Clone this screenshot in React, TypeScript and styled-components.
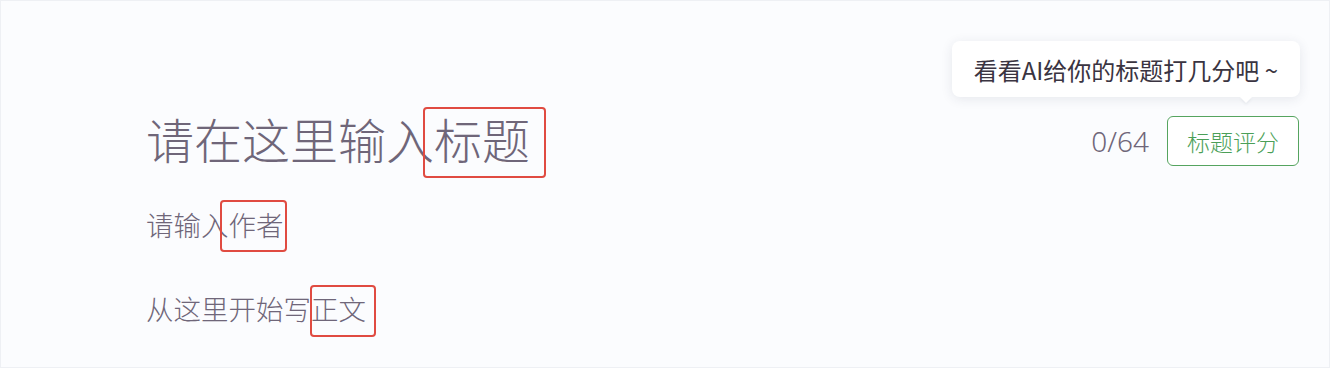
import React from "react";
import styled, { createGlobalStyle } from "styled-components";

const GlobalStyle = createGlobalStyle`
  html, body {
    margin: 0;
    padding: 0;
    background: #fbfcfe;
  }
  * {
    box-sizing: border-box;
  }
  body {
    font-family: "Noto Sans CJK SC", "Noto Sans", sans-serif;
  }
`;

// offsets of the red annotation frame from the marked text's line box
type Inset = { $l: number; $r: number; $t: number; $b: number };

export default function App() {
  return (
    <>
      <GlobalStyle />
      <Editor>
        <TitleRow>
          <TitleInput>
            请在这里输入
            <Mark $l={-11} $r={16} $t={2} $b={7}>标题</Mark>
          </TitleInput>
          <TitleTools>
            <Counter>0/64</Counter>
            <ScoreWrap>
              <Tooltip>看看AI给你的标题打几分吧 ~</Tooltip>
              <ScoreButton>标题评分</ScoreButton>
            </ScoreWrap>
          </TitleTools>
        </TitleRow>
        <AuthorLine>
          请输入
          <Mark $l={-9} $r={3} $t={2} $b={2}>作者</Mark>
        </AuthorLine>
        <BodyLine>
          从这里开始写
          <Mark $l={-1} $r={10} $t={3} $b={3}>正文</Mark>
        </BodyLine>
      </Editor>
    </>
  );
}

const Editor = styled.div`
  width: 1330px;
  height: 368px;
  padding: 104px 30px 0 145px;
  border: 1px solid #eef0f4;
  background: #fbfcfe;
  display: flex;
  flex-direction: column;
`;

const TitleRow = styled.div`
  display: flex;
  align-items: center;
  justify-content: space-between;
  height: 66px;
`;

const TitleInput = styled.div`
  font-size: 48px;
  line-height: 66px;
  font-weight: 300;
  color: #6f6679;
  white-space: nowrap;
`;

const Mark = styled.span<Inset>`
  position: relative;
  display: inline-block;

  &::after {
    content: "";
    position: absolute;
    left: ${({ $l }) => $l}px;
    right: ${({ $r }) => -$r}px;
    top: ${({ $t }) => $t}px;
    bottom: ${({ $b }) => -$b}px;
    border: 2px solid #e04b41;
    border-radius: 4px;
    pointer-events: none;
  }
`;

const TitleTools = styled.div`
  display: flex;
  align-items: center;
  gap: 18px;
  margin-top: 6px;
`;

const Counter = styled.span`
  font-family: "Noto Sans", sans-serif;
  font-size: 28px;
  font-weight: 300;
  color: #6f6679;
`;

const ScoreWrap = styled.div`
  position: relative;
`;

const ScoreButton = styled.button`
  height: 50px;
  padding: 0 19px;
  border: 1px solid #55a45f;
  border-radius: 6px;
  background: #ffffff;
  color: #4b9f58;
  font-family: "Noto Sans CJK SC", sans-serif;
  font-size: 23px;
  font-weight: 300;
  cursor: pointer;
`;

const Tooltip = styled.div`
  position: absolute;
  right: -1px;
  bottom: calc(100% + 19px);
  height: 56px;
  padding: 0 22px;
  display: flex;
  align-items: center;
  white-space: nowrap;
  background: #ffffff;
  border-radius: 8px;
  box-shadow: 0 2px 12px rgba(40, 50, 80, 0.1);
  font-size: 24px;
  color: #3a3441;

  &::after {
    content: "";
    position: absolute;
    right: 48px;
    top: 100%;
    border: 6px solid transparent;
    border-top-color: #ffffff;
    filter: drop-shadow(0 2px 1px rgba(40, 50, 80, 0.06));
  }
`;

const TextLine = styled.div`
  font-size: 27.5px;
  line-height: 52px;
  font-weight: 300;
  color: #6f6679;
  white-space: nowrap;
`;

const AuthorLine = styled(TextLine)`
  margin-top: 27px;
`;

const BodyLine = styled(TextLine)`
  margin-top: 32px;
`;
